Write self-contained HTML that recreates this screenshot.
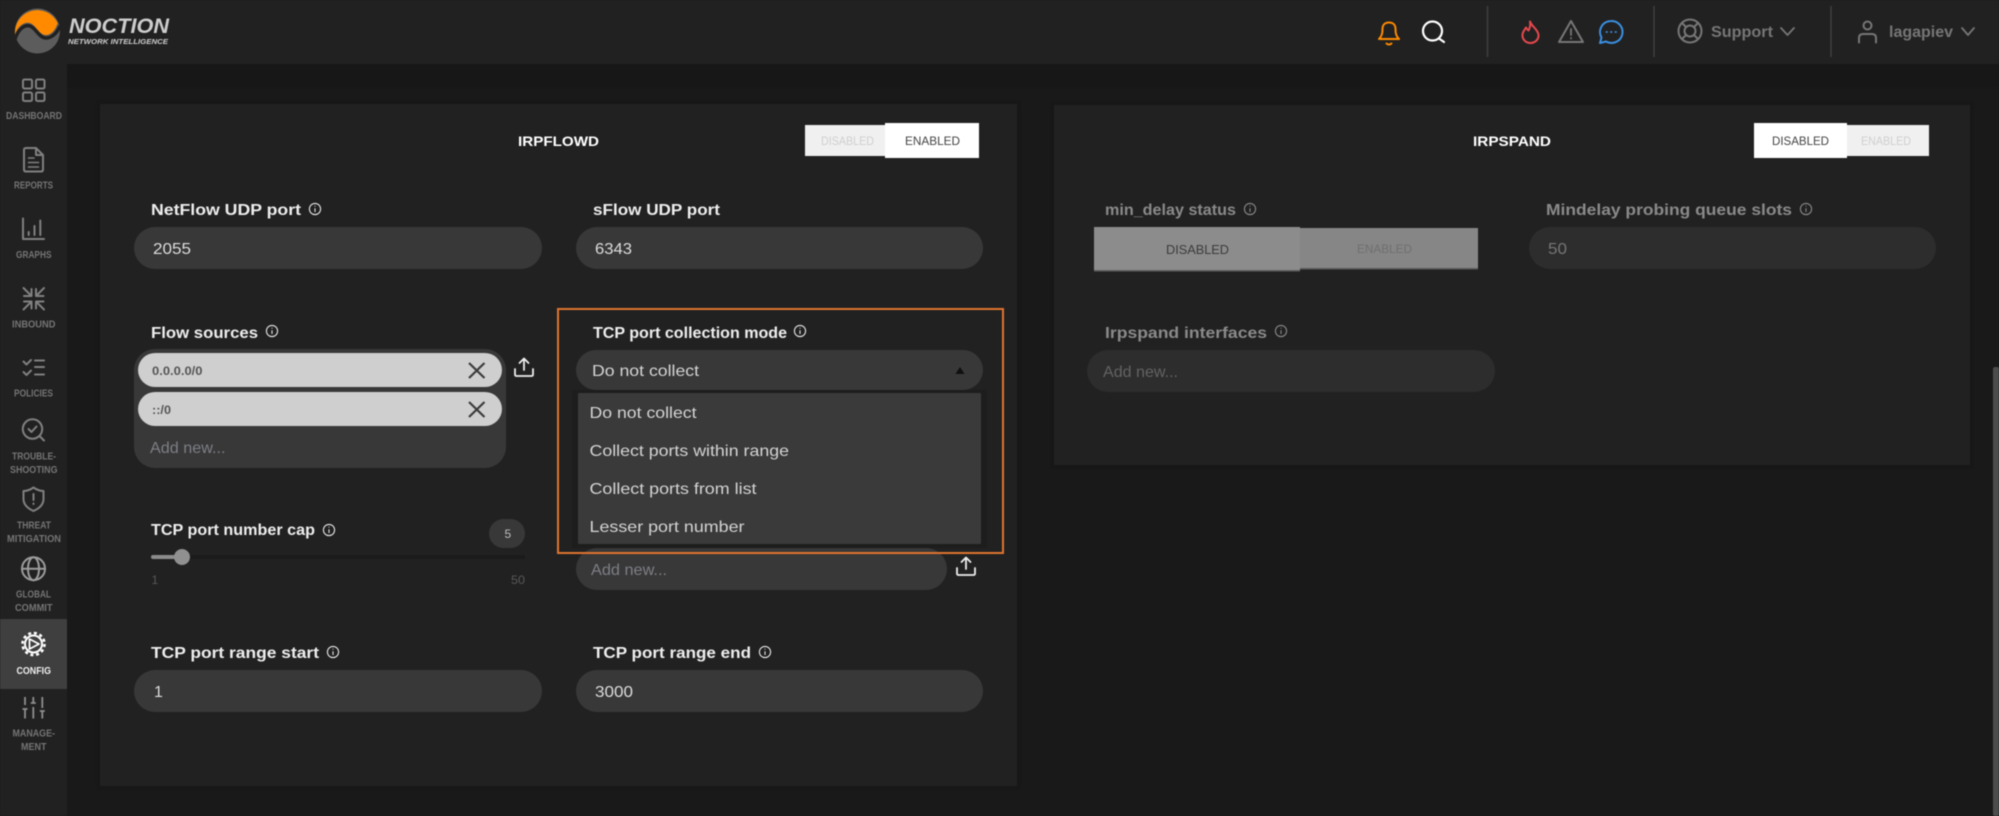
<!DOCTYPE html>
<html lang="en">
<head>
<meta charset="utf-8">
<title>Noction IRP Config</title>
<style>
html,body{margin:0;padding:0;width:1999px;height:816px;overflow:hidden;background:#1a1a1a}
svg{display:block;filter:blur(.45px)}
text{font-family:"Liberation Sans",Arial,sans-serif}
.lb{font-size:16px;font-weight:700;fill:#eeeeee}
.lbd{font-size:16px;font-weight:700;fill:#8a8a8a}
.val{font-size:16px;fill:#dddddd}
.ph{font-size:16px;fill:#7d7f86}
.opt{font-size:16px;fill:#d4d4d4}
.chip{font-size:12px;font-weight:700;fill:#555555}
.ttl{font-size:14px;font-weight:700;fill:#ffffff}
.tg{font-size:12px;fill:#444444}
.tgo{font-size:12px;fill:#cfcfcf}
.nav{font-size:10px;font-weight:700;fill:#757575}
.top{font-size:16px;font-weight:700;fill:#767676}
.ic{fill:none;stroke:#808080;stroke-width:2;stroke-linecap:round;stroke-linejoin:round}
.inf{fill:none;stroke:#e6e6e6;stroke-width:1.1}
.infd{fill:none;stroke:#8a8a8a;stroke-width:1.1}
</style>
</head>
<body>
<svg xmlns="http://www.w3.org/2000/svg" width="1999" height="816" viewBox="0 0 1999 816">
<defs>
<g id="i"><circle cx="0" cy="0" r="5.6"/><path d="M0-.8V3M0-3.2V-2.4"/></g>
<g id="up" fill="none" stroke="#eeeeee" stroke-width="1.8" stroke-linecap="round" stroke-linejoin="round"><path d="M10 13V1.5M5.5 6L10 1.5 14.5 6"/><path d="M1 12V17.5Q1 19 2.5 19H17.5Q19 19 19 17.5V12"/></g>
</defs>

<!-- background -->
<rect width="1999" height="816" fill="#191919"/>
<rect x="67" y="64" width="1932" height="24" fill="#171717"/>

<!-- cards -->
<rect x="96" y="100" width="925" height="690" fill="#171717"/>
<rect x="1050" y="101" width="924" height="368" fill="#171717"/>
<rect x="100" y="104" width="917" height="682" fill="#212121"/>
<rect x="1054" y="105" width="916" height="360" fill="#212121"/>

<!-- scrollbar -->
<rect x="1993" y="367" width="6" height="449" rx="2" fill="#4c4c4c"/>

<!-- header -->
<rect width="1999" height="64" fill="#212121"/>
<circle cx="37.5" cy="31" r="22.5" fill="#5c5c5c"/>
<path d="M15 39C18 30 24 24 30 26C36 28 39 38 46 38C52 38 57 33 60 26" fill="none" stroke="#212121" stroke-width="3.5"/>
<path d="M15 35C17 27 24 21 30 23C36 25 39 35 46 35C51 35 55.5 30 57.7 23A22.5 22.5 0 0 0 15 35Z" fill="#ff8a00"/>
<text x="69" y="33" textLength="100" lengthAdjust="spacingAndGlyphs" font-size="21" font-weight="700" font-style="italic" fill="#cdcdcd">NOCTION</text>
<text x="68" y="44" textLength="100" lengthAdjust="spacingAndGlyphs" font-size="7.5" font-weight="700" font-style="italic" fill="#cdcdcd">NETWORK INTELLIGENCE</text>

<g fill="none" stroke="#ff8a00" stroke-width="2" stroke-linecap="round" stroke-linejoin="round">
<path d="M1379 39C1382 36 1382.5 33 1382.5 29C1382.5 25 1385 22.5 1389 22.5C1393 22.5 1395.5 25 1395.5 29C1395.5 33 1396 36 1399 39Z"/>
<path d="M1386.5 43.5Q1389 45.5 1391.5 43.5"/>
</g>
<g fill="none" stroke="#ffffff" stroke-width="2.2" stroke-linecap="round"><circle cx="1432.5" cy="31" r="9.5"/><path d="M1439 38.5L1444 42"/></g>
<g stroke="#3f3f3f" stroke-width="1.5"><path d="M1487.5 6V57M1654 6V57M1831 6V57"/></g>
<path d="M1530 21.5C1531.5 26 1536 28 1538 33C1540 38.5 1535.5 43 1530.5 43C1525.5 43 1522 39 1522.5 34.5C1523 31 1525 29.5 1526 27.5C1527 29 1527.5 30 1528.5 30.5C1530 28 1530.5 25 1530 21.5Z" fill="none" stroke="#e5484d" stroke-width="2" stroke-linejoin="round"/>
<path d="M1571 21L1583 42H1559Z" fill="none" stroke="#767676" stroke-width="2" stroke-linejoin="round"/>
<path d="M1571 29V35M1571 38V38.5" stroke="#767676" stroke-width="1.8" stroke-linecap="round"/>
<path d="M1611 21A11 11 0 1 1 1606 41.5L1600 43L1601.5 37.5A11 11 0 0 1 1611 21Z" fill="none" stroke="#3b8fe0" stroke-width="2" stroke-linejoin="round"/>
<path d="M1606.5 32H1607M1611 32H1611.5M1615.5 32H1616" stroke="#3b8fe0" stroke-width="1.8" stroke-linecap="round"/>
<g fill="none" stroke="#767676" stroke-width="2"><circle cx="1690" cy="31" r="11.5"/><circle cx="1690" cy="31" r="5.5"/><path d="M1682 23L1686 27M1698 23L1694 27M1682 39L1686 35M1698 39L1694 35"/></g>
<text x="1711" y="37" textLength="62" lengthAdjust="spacingAndGlyphs" class="top">Support</text>
<path d="M1781 28L1787.5 35L1794 28" fill="none" stroke="#767676" stroke-width="1.8" stroke-linecap="round" stroke-linejoin="round"/>
<g fill="none" stroke="#767676" stroke-width="2" stroke-linecap="round"><circle cx="1867.5" cy="25.5" r="4"/><path d="M1859 42.5V38Q1859 34 1863 34H1872Q1876 34 1876 38V42.5"/></g>
<text x="1889" y="37" textLength="64" lengthAdjust="spacingAndGlyphs" class="top">lagapiev</text>
<path d="M1962 28L1968 35L1974 28" fill="none" stroke="#767676" stroke-width="1.8" stroke-linecap="round" stroke-linejoin="round"/>

<!-- sidebar -->
<rect x="0" y="64" width="67" height="752" fill="#212121"/>
<rect x="0" y="619" width="67" height="70" fill="#3f3f3f"/>

<g class="ic">
<rect x="23" y="79.5" width="9" height="9" rx="1.5"/><rect x="36" y="79.5" width="8.5" height="9" rx="1.5"/><rect x="23" y="92.5" width="9" height="8.5" rx="1.5"/><rect x="36" y="92.5" width="8.5" height="8.5" rx="1.5"/>
<path d="M36 148H26Q24 148 24 150V169.5Q24 171.500 26 171.5H41Q43 171.5 43 169.5V155L36 148V155H43"/><path d="M28.5 158H34M28.5 162.5H38.5M28.5 167H38.5" stroke-width="1.6"/>
<path d="M23 218.5V239H44"/><path d="M28.7 232V235M34.5 226V235M40.3 220.5V235"/>
<path d="M23.5 288L30.5 295M24 296H31.500V289"/><path d="M44 288L37 295M43.5 296H36V289"/><path d="M23.5 309.5L30.5 302.5M24 301.500H31.5V308.5"/><path d="M44 309.5L37 302.5M43.5 301.5H36V308.500"/>
<path d="M23.5 361.500L26.5 364.5L31 360M23.5 372L26.5 375L31 370.5"/><path d="M35 360.5H44M35 367H44M35 374.5H44"/>
<circle cx="32.5" cy="429" r="9.7"/><path d="M39.5 436L44 440.5"/><path d="M28.5 429L31.5 432L36.5 426.5"/>
<path d="M33.5 487.5C30 490 27 491 23.5 491V499C23.5 504.5 28 508.5 33.5 511C39 508.500 43.5 504.5 43.5 499V491C40 491 37 490 33.5 487.5Z"/><path d="M33.5 494V500M33.5 503.5V504"/>
<circle cx="33.5" cy="568.7" r="11.5" stroke="#9c9c9c"/><ellipse cx="33.5" cy="568.7" rx="5.5" ry="11.5" stroke="#9c9c9c"/><path d="M22 568.7H45" stroke="#9c9c9c"/>
<path d="M25 697V705M25 709V718.500M22.500 709H27.500M33.300 697V703M30.800 703H35.800M33.300 707V718.500M42.300 697V708M39.800 711H44.800M42.300 711V718.500" stroke="#8f8f8f" stroke-width="1.800" stroke-linecap="butt"/>
</g>
<g fill="none" stroke="#ffffff" stroke-linejoin="round">
<circle cx="33.5" cy="644" r="8.5" stroke-width="2"/>
<circle cx="33.5" cy="644" r="11" stroke-width="2.6" stroke-dasharray="3 2.76"/>
<path d="M29.5 639L39 644L29.5 649Z" stroke-width="1.8"/>
</g>

<text x="6" y="119" textLength="56" lengthAdjust="spacingAndGlyphs" class="nav">DASHBOARD</text>
<text x="14" y="188.5" textLength="39" lengthAdjust="spacingAndGlyphs" class="nav">REPORTS</text>
<text x="16" y="258" textLength="35.5" lengthAdjust="spacingAndGlyphs" class="nav">GRAPHS</text>
<text x="12" y="327.5" textLength="43.5" lengthAdjust="spacingAndGlyphs" class="nav">INBOUND</text>
<text x="14" y="396.5" textLength="39" lengthAdjust="spacingAndGlyphs" class="nav">POLICIES</text>
<text x="12" y="459.5" textLength="44" lengthAdjust="spacingAndGlyphs" class="nav">TROUBLE-</text>
<text x="10" y="473" textLength="47.5" lengthAdjust="spacingAndGlyphs" class="nav">SHOOTING</text>
<text x="17" y="528.5" textLength="34" lengthAdjust="spacingAndGlyphs" class="nav">THREAT</text>
<text x="7" y="542" textLength="54" lengthAdjust="spacingAndGlyphs" class="nav">MITIGATION</text>
<text x="16" y="597.5" textLength="35" lengthAdjust="spacingAndGlyphs" class="nav">GLOBAL</text>
<text x="15" y="611" textLength="37.5" lengthAdjust="spacingAndGlyphs" class="nav">COMMIT</text>
<text x="16.5" y="674" textLength="34.5" lengthAdjust="spacingAndGlyphs" class="nav" style="fill:#f0f0f0">CONFIG</text>
<text x="12.5" y="736.5" textLength="42.5" lengthAdjust="spacingAndGlyphs" class="nav">MANAGE-</text>
<text x="21" y="750" textLength="25.5" lengthAdjust="spacingAndGlyphs" class="nav">MENT</text>

<!-- IRPFLOWD card -->
<text x="518" y="146" textLength="81" lengthAdjust="spacingAndGlyphs" class="ttl">IRPFLOWD</text>
<rect x="805" y="125" width="80" height="31" fill="#f0f0f0"/>
<rect x="885" y="123" width="94" height="35" fill="#ffffff"/>
<text x="821" y="145" textLength="53" lengthAdjust="spacingAndGlyphs" class="tgo">DISABLED</text>
<text x="905" y="145" textLength="55" lengthAdjust="spacingAndGlyphs" class="tg">ENABLED</text>

<text x="151" y="215" textLength="150" lengthAdjust="spacingAndGlyphs" class="lb">NetFlow UDP port</text>
<use href="#i" x="315" y="209" class="inf"/>
<rect x="134" y="227" width="408" height="42" rx="21" fill="#383838"/>
<text x="153" y="254" textLength="38" lengthAdjust="spacingAndGlyphs" class="val">2055</text>

<text x="593" y="215" textLength="127" lengthAdjust="spacingAndGlyphs" class="lb">sFlow UDP port</text>
<rect x="576" y="227" width="407" height="42" rx="21" fill="#383838"/>
<text x="595" y="254" textLength="37" lengthAdjust="spacingAndGlyphs" class="val">6343</text>

<text x="151" y="338" textLength="107" lengthAdjust="spacingAndGlyphs" class="lb">Flow sources</text>
<use href="#i" x="272" y="331" class="inf"/>
<rect x="134" y="349" width="372" height="119" rx="21" fill="#383838"/>
<rect x="138" y="353" width="364" height="34" rx="17" fill="#cfcfcf"/>
<rect x="138" y="392" width="364" height="34" rx="17" fill="#cfcfcf"/>
<text x="152" y="375" textLength="50.5" lengthAdjust="spacingAndGlyphs" class="chip">0.0.0.0/0</text>
<text x="152" y="414" textLength="19" lengthAdjust="spacingAndGlyphs" class="chip">::/0</text>
<path d="M469 363L484.5 378M484.5 363L469 378M469 402L484.5 417M484.5 402L469 417" stroke="#3c3c3c" stroke-width="2.2" fill="none"/>
<text x="150" y="453" textLength="75.5" lengthAdjust="spacingAndGlyphs" class="ph">Add new...</text>
<use href="#up" x="514" y="357"/>

<text x="151" y="535" textLength="164" lengthAdjust="spacingAndGlyphs" class="lb">TCP port number cap</text>
<use href="#i" x="329" y="530" class="inf"/>
<rect x="489" y="519" width="36" height="29" rx="14.5" fill="#383838"/>
<text x="504.5" y="538" font-size="12" fill="#bdbdbd">5</text>
<rect x="151" y="555" width="374" height="4" rx="2" fill="#1b1b1b"/>
<rect x="151" y="555" width="30" height="4" rx="2" fill="#8c8c8c"/>
<circle cx="182" cy="557" r="8" fill="#909090"/>
<text x="151.5" y="584" font-size="12" fill="#585858">1</text>
<text x="511" y="584" textLength="14" lengthAdjust="spacingAndGlyphs" font-size="12" fill="#585858">50</text>

<text x="151" y="658" textLength="168" lengthAdjust="spacingAndGlyphs" class="lb">TCP port range start</text>
<use href="#i" x="333" y="652" class="inf"/>
<rect x="134" y="670" width="408" height="42" rx="21" fill="#383838"/>
<text x="154" y="697" class="val">1</text>

<text x="593" y="658" textLength="158" lengthAdjust="spacingAndGlyphs" class="lb">TCP port range end</text>
<use href="#i" x="765" y="652" class="inf"/>
<rect x="576" y="670" width="407" height="42" rx="21" fill="#383838"/>
<text x="595" y="697" textLength="38" lengthAdjust="spacingAndGlyphs" class="val">3000</text>

<!-- Add new under dropdown -->
<rect x="576" y="548" width="371" height="42" rx="21" fill="#383838"/>
<text x="591" y="575" textLength="76" lengthAdjust="spacingAndGlyphs" class="ph">Add new...</text>
<use href="#up" x="956" y="556"/>

<!-- dropdown -->
<text x="593" y="338" textLength="194" lengthAdjust="spacingAndGlyphs" class="lb">TCP port collection mode</text>
<use href="#i" x="800" y="331" class="inf"/>
<rect x="576" y="350" width="407" height="40" rx="20" fill="#383838"/>
<text x="592" y="376" textLength="107" lengthAdjust="spacingAndGlyphs" class="opt">Do not collect</text>
<path d="M960 367L964.5 374H955.5Z" fill="#0f0f0f"/>
<rect x="572" y="390" width="415" height="158" fill="#1d1d1d"/>
<rect x="578" y="393" width="403" height="151" rx="1" fill="#3a3a3a"/>
<text x="589.5" y="418" textLength="107" lengthAdjust="spacingAndGlyphs" class="opt">Do not collect</text>
<text x="589.5" y="456" textLength="199.5" lengthAdjust="spacingAndGlyphs" class="opt">Collect ports within range</text>
<text x="589.5" y="494" textLength="167" lengthAdjust="spacingAndGlyphs" class="opt">Collect ports from list</text>
<text x="589.5" y="532" textLength="155" lengthAdjust="spacingAndGlyphs" class="opt">Lesser port number</text>
<rect x="558" y="309" width="445" height="244" fill="none" stroke="#df732f" stroke-width="2"/>

<!-- IRPSPAND card -->
<text x="1473" y="146" textLength="78" lengthAdjust="spacingAndGlyphs" class="ttl">IRPSPAND</text>
<rect x="1847" y="125" width="82" height="31" fill="#f0f0f0"/>
<rect x="1754" y="123" width="93" height="35" fill="#ffffff"/>
<text x="1772" y="145" textLength="57" lengthAdjust="spacingAndGlyphs" class="tg">DISABLED</text>
<text x="1861" y="145" textLength="50" lengthAdjust="spacingAndGlyphs" class="tgo">ENABLED</text>

<text x="1105" y="215" textLength="131" lengthAdjust="spacingAndGlyphs" class="lbd">min_delay status</text>
<use href="#i" x="1250" y="209" class="infd"/>
<rect x="1300" y="228" width="178" height="41" fill="#868686"/>
<rect x="1300" y="268" width="178" height="1.5" fill="#5a5a5a"/>
<rect x="1094" y="227" width="206" height="44" fill="#8c8c8c"/>
<rect x="1094" y="270" width="206" height="1.5" fill="#5e5e5e"/>
<text x="1166" y="254" textLength="63" lengthAdjust="spacingAndGlyphs" font-size="13" fill="#3c3c3c">DISABLED</text>
<text x="1357" y="253" textLength="55" lengthAdjust="spacingAndGlyphs" font-size="12" fill="#6f6f6f">ENABLED</text>

<text x="1546" y="215" textLength="246" lengthAdjust="spacingAndGlyphs" class="lbd">Mindelay probing queue slots</text>
<use href="#i" x="1806" y="209" class="infd"/>
<rect x="1529" y="227" width="407" height="42" rx="21" fill="#2d2d2d"/>
<text x="1548" y="254" textLength="19" lengthAdjust="spacingAndGlyphs" font-size="16" fill="#777777">50</text>

<text x="1105" y="338" textLength="162" lengthAdjust="spacingAndGlyphs" class="lbd">Irpspand interfaces</text>
<use href="#i" x="1281" y="331" class="infd"/>
<rect x="1087" y="350" width="408" height="42" rx="21" fill="#2d2d2d"/>
<text x="1103" y="377" textLength="75" lengthAdjust="spacingAndGlyphs" font-size="16" fill="#636363">Add new...</text>
</svg>
</body>
</html>
